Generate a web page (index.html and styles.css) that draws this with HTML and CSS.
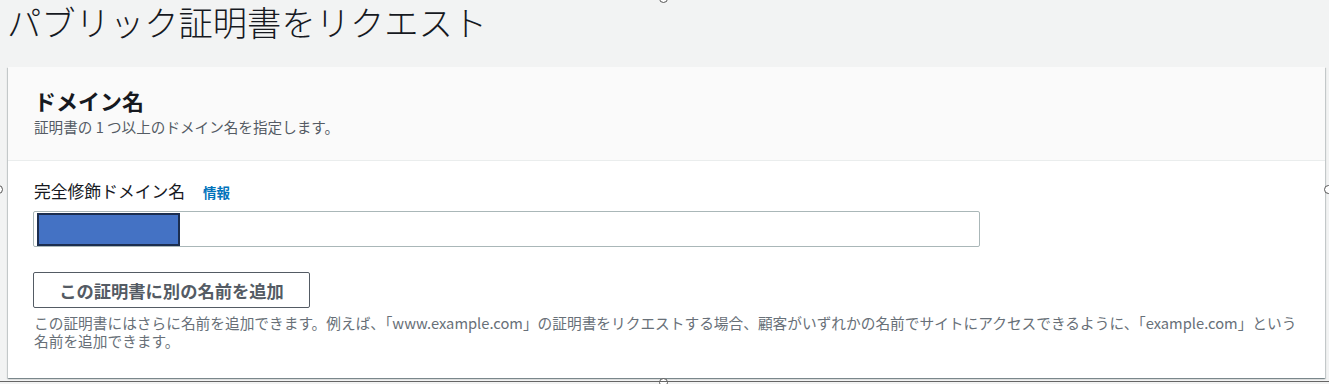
FILE: index.html
```html
<!DOCTYPE html>
<html lang="ja">
<head>
    <meta charset="UTF-8">
    <meta name="viewport" content="width=device-width, initial-scale=1.0">
    <title>パブリック証明書をリクエスト</title>
    <link rel="stylesheet" href="styles.css">
</head>
<body>
    <h1 class="page-title">パブリック証明書をリクエスト</h1>

    <div class="card">
        <div class="card-header">
            <h2>ドメイン名</h2>
            <p class="card-desc">証明書の 1 つ以上のドメイン名を指定します。</p>
        </div>
        <div class="card-body">
            <div class="field-label">
                <span>完全修飾ドメイン名</span>
                <a class="info-link" href="#">情報</a>
            </div>
            <div class="text-input">
                <span class="redacted"></span>
            </div>
            <button class="add-btn">この証明書に別の名前を追加</button>
            <p class="hint">この証明書にはさらに名前を追加できます。例えば、「www.example.com」の証明書をリクエストする場合、顧客がいずれかの名前でサイトにアクセスできるように、「example.com」という名前を追加できます。</p>
        </div>
    </div>

    <!-- selection handles from the screenshot tool -->
    <span class="handle handle-top"></span>
    <span class="handle handle-left"></span>
    <span class="handle handle-right"></span>
    <span class="handle handle-bottom"></span>
    <div class="frame-line"></div>
</body>
</html>
```

FILE: styles.css
```css
body {
    margin: 0;
    padding: 0;
    width: 1329px;
    height: 384px;
    overflow: hidden;
    position: relative;
    background-color: #f2f3f3;
    font-family: "Noto Sans CJK JP", "Noto Sans", sans-serif;
    color: #16191f;
}
.page-title {
    margin: 0;
    padding: 0 0 0 7px;
    height: 67px;
    font-size: 34.3px;
    font-weight: 300;
    line-height: 42px;
    color: #16191f;
}
.card {
    margin: 0 4px 0 8px;
    background-color: #fff;
    box-shadow: 0 1px 1px 0 rgba(0, 28, 36, 0.3), 1px 1px 1px 0 rgba(0, 28, 36, 0.15), -1px 1px 1px 0 rgba(0, 28, 36, 0.15);
}
.card-header {
    background-color: #fafafa;
    border-bottom: 1px solid #eaeded;
    padding: 18px 26px 24px;
}
.card-header h2 {
    margin: 0;
    font-size: 22px;
    font-weight: 700;
    line-height: 30px;
}
.card-desc {
    margin: 2px 0 0;
    font-size: 14.6px;
    line-height: 19px;
    color: #545b64;
}
.card-body {
    padding: 19px 26px 28px 25px;
}
.field-label {
    display: flex;
    align-items: baseline;
    gap: 18px;
    font-size: 16.8px;
    line-height: 22px;
    margin-left: 1px;
}
.info-link {
    font-size: 13.5px;
    font-weight: 700;
    color: #0073bb;
    text-decoration: none;
}
.text-input {
    margin-top: 8px;
    width: 942px;
    height: 34px;
    border: 1px solid #aab7b8;
    border-radius: 2px;
    background-color: #fff;
    display: flex;
    align-items: center;
    padding-left: 3px;
}
.redacted {
    box-sizing: border-box;
    width: 143px;
    height: 33px;
    background-color: #4472c4;
    border: 2px solid #1c2e4f;
}
.add-btn {
    display: block;
    margin-top: 25px;
    width: 277px;
    height: 36px;
    border: 1px solid #545b64;
    border-radius: 2px;
    background-color: #fff;
    font-family: inherit;
    font-size: 17.3px;
    font-weight: 700;
    color: #545b64;
    padding: 0;
}
.hint {
    margin: 6px 0 0 1px;
    font-size: 14.7px;
    line-height: 18px;
    color: #687078;
}
.handle {
    position: absolute;
    width: 7px;
    height: 7px;
    border: 1.5px solid #555;
    border-radius: 50%;
    background-color: #fff;
}
.handle-top {
    left: 659px;
    top: -6px;
}
.handle-left {
    left: -6px;
    top: 185px;
}
.handle-right {
    left: 1324px;
    top: 185px;
}
.handle-bottom {
    left: 659px;
    top: 378px;
}
.frame-line {
    position: absolute;
    left: 0;
    right: 0;
    top: 381px;
    height: 1px;
    background-color: #666;
}
```
